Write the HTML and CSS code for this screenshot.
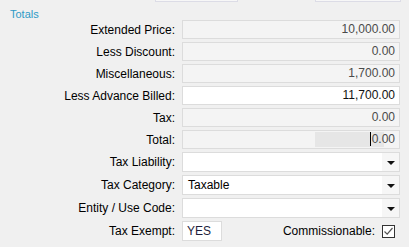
FILE: index.html
```html
<!DOCTYPE html>
<html lang="en">
  <head>
    <meta charset="UTF-8" />
    <link rel="stylesheet" href="styles.css">
    <title>Totals</title>
  </head>
  <body>
    <div class="top-strip">
      <div class="stub stub-left"></div>
      <div class="stub stub-right"></div>
    </div>
    <h4 class="section-title">Totals</h4>
    <div class="totals-form">
      <label>Extended Price:</label>
      <div class="field readonly">10,000.00</div>

      <label>Less Discount:</label>
      <div class="field readonly">0.00</div>

      <label>Miscellaneous:</label>
      <div class="field readonly">1,700.00</div>

      <label>Less Advance Billed:</label>
      <div class="field editable">11,700.00</div>

      <label>Tax:</label>
      <div class="field readonly">0.00</div>

      <label>Total:</label>
      <div class="field readonly total-field">
        <span class="selection"></span>
        <span class="caret-value">0.00</span>
      </div>

      <label>Tax Liability:</label>
      <div class="select"><span class="select-text"></span><span class="arrow"></span></div>

      <label>Tax Category:</label>
      <div class="select"><span class="select-text">Taxable</span><span class="arrow"></span></div>

      <label>Entity / Use Code:</label>
      <div class="select"><span class="select-text"></span><span class="arrow"></span></div>

      <label>Tax Exempt:</label>
      <div class="last-row">
        <div class="field editable exempt">YES</div>
        <span class="check-label">Commissionable:</span>
        <span class="checkbox">
          <svg width="11" height="11" viewBox="0 0 11 11">
            <path d="M1.5 5.5 L4.2 8.2 L9.5 2" fill="none" stroke="#555" stroke-width="1.2" />
          </svg>
        </span>
      </div>
    </div>
  </body>
</html>
```

FILE: styles.css
```css
body {
  margin: 0;
  background-color: #f0f0f0;
  font-family: "Liberation Sans", Arial, sans-serif;
  font-size: 12px;
  color: #000;
  width: 409px;
  height: 247px;
  overflow: hidden;
}

.top-strip {
  display: flex;
  height: 2px;
}

.stub {
  height: 1px;
  border: 1px solid #dcdce6;
  border-top: none;
  background-color: #f7f7f7;
}

.stub-left {
  margin-left: 155px;
  width: 81px;
}

.stub-right {
  margin-left: 77px;
  width: 84px;
}

.section-title {
  margin: 7px 0 0 10px;
  height: 11px;
  font-size: 11px;
  line-height: 11px;
  font-weight: normal;
  color: #2e9ac6;
}

.totals-form {
  display: grid;
  grid-template-columns: 175px 218px;
  column-gap: 7px;
  row-gap: 3px;
  align-items: center;
}

.totals-form label {
  text-align: right;
}

.field {
  box-sizing: border-box;
  height: 19px;
  line-height: 17px;
  padding: 0 4px;
  border: 1px solid #dcdcdc;
  text-align: right;
}

.readonly {
  background-color: #f4f4f4;
  color: #4a4a4a;
}

.editable {
  background-color: #fff;
  color: #111;
}

.total-field {
  position: relative;
}

.selection {
  position: absolute;
  right: 15px;
  top: 1px;
  width: 69px;
  height: 15px;
  background-color: #e6e6e6;
}

.caret-value {
  position: relative;
  border-left: 1px solid #000;
  padding-left: 1px;
}

.select {
  box-sizing: border-box;
  height: 20px;
  display: flex;
  border: 1px solid #dcdcdc;
  background-color: #fff;
}

.select-text {
  flex: 1;
  line-height: 18px;
  padding-left: 5px;
}

.arrow {
  width: 17px;
  background-color: #f6f6f6;
  display: flex;
  align-items: center;
  justify-content: center;
}

.arrow::after {
  content: "";
  border-left: 4px solid transparent;
  border-right: 4px solid transparent;
  border-top: 4px solid #111;
  margin-top: 1px;
}

.last-row {
  display: flex;
  align-items: center;
  height: 20px;
}

.exempt {
  width: 40px;
  height: 20px;
  line-height: 18px;
  text-align: left;
  color: #1e1e3c;
}

.check-label {
  margin-left: auto;
  margin-right: 7px;
}

.checkbox {
  box-sizing: border-box;
  width: 13px;
  height: 13px;
  margin-right: 5px;
  border: 1px solid #333;
  background-color: #fff;
  display: flex;
  align-items: center;
  justify-content: center;
}
```
